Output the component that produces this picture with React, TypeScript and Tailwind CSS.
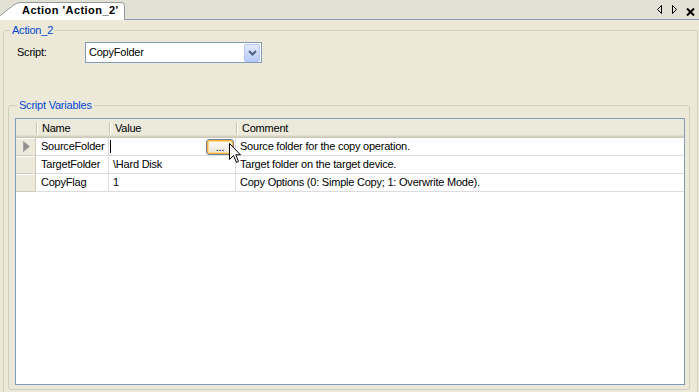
import React from "react";

const rows = [
  { name: "SourceFolder", value: "", comment: "Source folder for the copy operation.", current: true },
  { name: "TargetFolder", value: "\\Hard Disk", comment: "Target folder on the target device." },
  { name: "CopyFlag", value: "1", comment: "Copy Options (0: Simple Copy; 1: Overwrite Mode)." },
];

function HeaderCell({ label, className }: { label: string; className: string }) {
  return (
    <div className={`flex items-center h-full ${className}`}>
      <span className="w-[2px] h-[13px] border-l border-[#c7c5b2] border-r border-r-white" />
      <span className="pl-[4px]">{label}</span>
    </div>
  );
}

function Tab() {
  return (
    <div className="relative w-[125px] h-[20px] shrink-0">
      <svg className="absolute inset-0" width="125" height="20" viewBox="0 0 125 20">
        <path
          d="M-6 20.5 L13 5.5 Q16.5 2.5 21 2.5 L121 2.5 Q124.5 2.5 124.5 6 L124.5 20.5"
          fill="#ffffff"
          stroke="#919b9c"
        />
      </svg>
      <div className="relative pl-[22px] pt-[4px] font-bold tracking-[0.45px]">Action 'Action_2'</div>
    </div>
  );
}

function Cursor() {
  return (
    <svg className="absolute left-[229px] top-[143px]" width="13" height="21" viewBox="0 0 13 21">
      <path
        d="M0.5 0.5 L0.5 16.5 L4.5 12.5 L7.5 19.5 L9.5 18.5 L6.8 11.8 L11.5 11.8 Z"
        fill="#ffffff"
        stroke="#000000"
        strokeLinejoin="miter"
      />
    </svg>
  );
}

export default function App() {
  return (
    <div className="relative w-[699px] h-[392px] overflow-hidden bg-[#ece9d8] text-black text-[11px] leading-[13px] tracking-[-0.22px] font-['Tahoma','Liberation_Sans',sans-serif]">
      {/* tab strip */}
      <div className="flex h-[20px] bg-[#e3e1d5]">
        <Tab />
        <div className="flex-1 flex justify-end items-start border-b border-[#8b9bbd]">
          <svg className="mt-[5px]" width="6" height="10" viewBox="0 0 6 10">
            <path d="M4.5 0.5 L0.5 4.5 L4.5 8.5 Z" fill="none" stroke="#000" />
          </svg>
          <svg className="mt-[5px] ml-[9px]" width="6" height="10" viewBox="0 0 6 10">
            <path d="M0.5 0.5 L4.5 4.5 L0.5 8.5 Z" fill="none" stroke="#000" />
          </svg>
          <svg className="mt-[8px] ml-[8px] mr-[4px]" width="9" height="8" viewBox="0 0 9 8">
            <path d="M1 0.5 L8 7.5 M8 0.5 L1 7.5" stroke="#000" strokeWidth="2" />
          </svg>
        </div>
      </div>

      <div className="pl-[3px] pr-[1px] pt-[4px]">
        <fieldset className="h-[380px] border border-[#d0d0bf] rounded-[3px]">
          <legend className="ml-[6px] px-[2px] text-[#0046d5]">Action_2</legend>

          <div className="flex items-center pl-[13px] mt-[5px]">
            <span className="w-[68px]">Script:</span>
            <div className="w-[177px] h-[21px] border border-[#7f9db9] bg-white flex items-center">
              <span className="pl-[3px]">CopyFolder</span>
              <div className="ml-auto mr-[1px] w-[16px] h-[18px] rounded-[2px] border border-[#b5c8f4] bg-linear-to-b from-[#e3ebfe] to-[#b6c9f6] flex items-center justify-center">
                <svg width="9" height="6" viewBox="0 0 9 6">
                  <path d="M1 1 L4.5 4.5 L8 1" fill="none" stroke="#4d6185" strokeWidth="2" />
                </svg>
              </div>
            </div>
          </div>

          <fieldset className="mt-[36px] ml-[4px] mr-[7px] border border-[#d0d0bf] rounded-[3px] pl-[6px] pr-[4px] pt-[6px] pb-[4px]">
            <legend className="ml-[2px] px-[2px] text-[#0046d5]">Script Variables</legend>

            <div className="h-[267px] border border-[#7f9db9] bg-white">
              <div className="flex h-[19px] bg-[#ebeadb] shadow-[inset_0_-1px_0_#cbc7b8,inset_0_-2px_0_#d6d2c2,inset_0_-3px_0_#e2dfd0]">
                <div className="w-[20px]" />
                <HeaderCell label="Name" className="w-[73px]" />
                <HeaderCell label="Value" className="w-[127px]" />
                <HeaderCell label="Comment" className="flex-1" />
              </div>

              {rows.map((r) => (
                <div key={r.name} className="flex h-[18px]">
                  <div className="w-[20px] bg-[#ebeadb] border-r border-b border-[#cfccbc] shadow-[inset_0_1px_0_#ffffff] flex items-center pl-[7px]">
                    {r.current && (
                      <svg width="7" height="11" viewBox="0 0 7 11">
                        <path d="M0.5 0.5 L6.5 5.5 L0.5 10.5 Z" fill="#8f8f8f" stroke="#a4a4a4" />
                      </svg>
                    )}
                  </div>
                  <div className="w-[73px] border-r border-b border-[#dcdcdc] flex items-center pl-[5px]">
                    {r.name}
                  </div>
                  <div className="w-[127px] border-r border-b border-[#dcdcdc] flex items-center">
                    {r.current ? (
                      <>
                        <span className="ml-[1px] w-px h-[13px] bg-black" />
                        <div className="ml-auto mr-px w-[28px] h-[16px] rounded-[3px] border border-[#6f7f9c] bg-linear-to-b from-[#ffffff] to-[#e6e3d6] shadow-[inset_0_0_0_1px_#f5b13a,inset_0_0_0_2px_#fbd98e] flex items-end justify-center pb-[1px] leading-[11px]">
                          ...
                        </div>
                      </>
                    ) : (
                      <span className="pl-[4px]">{r.value}</span>
                    )}
                  </div>
                  <div className="flex-1 border-b border-[#dcdcdc] flex items-center pl-[4px]">
                    {r.comment}
                  </div>
                </div>
              ))}
            </div>
          </fieldset>
        </fieldset>
      </div>

      <Cursor />
    </div>
  );
}
